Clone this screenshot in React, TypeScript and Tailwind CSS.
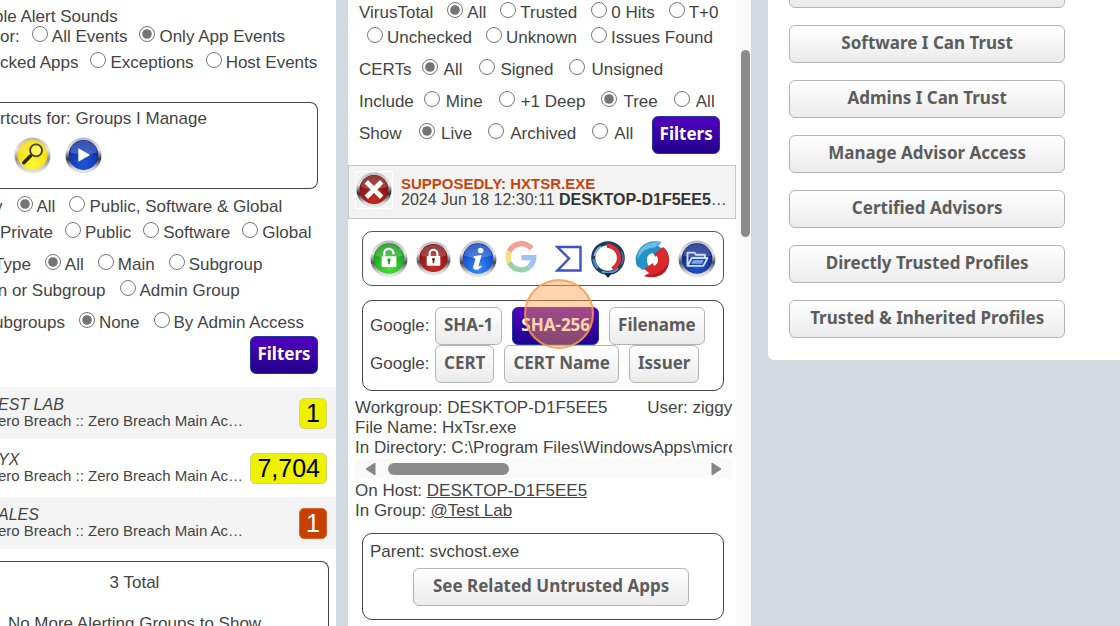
import { useId } from "react";
import type { ReactNode } from "react";
import clsx from "clsx";

interface RadioRowProps {
  name: string;
  label?: string;
  options: string[];
  selected?: string;
  className?: string;
  spacing?: "tight" | "normal" | "wide";
}

const rowGaps = { tight: "gap-3", normal: "gap-3.5", wide: "gap-4" };

const RadioRow = ({ name, label, options, selected, className, spacing = "normal" }: RadioRowProps) => (
  <div className={clsx("flex shrink-0 items-center whitespace-nowrap", rowGaps[spacing], className)}>
    {label && <span className={clsx(spacing === "wide" && "-mr-1.5 min-w-[50px]")}>{label}</span>}
    {options.map((option) => (
      <label key={option} className={clsx("flex items-center", spacing === "wide" ? "gap-1.5" : "gap-1")}>
        <input
          type="radio"
          name={name}
          defaultChecked={option === selected}
          className="mb-1.5 size-4 shrink-0 accent-[#757575]"
        />
        {option}
      </label>
    ))}
  </div>
);

interface ButtonProps {
  children: ReactNode;
  primary?: boolean;
  className?: string;
}

const Button = ({ children, primary, className }: ButtonProps) => (
  <button
    type="button"
    className={clsx(
      "h-[38px] shrink-0 rounded-md border bg-linear-to-b pb-0.5 font-['Noto_Sans','Open_Sans',sans-serif] text-[17px] leading-5 font-bold whitespace-nowrap",
      primary
        ? "border-[#1d3a9c] from-[#5200bd] to-[#22008c] text-white"
        : "border-[#b4b4b4] from-white to-[#ebebeb] text-[#5c5c5c]",
      className,
    )}
  >
    {children}
  </button>
);

interface OrbProps {
  light: string;
  dark: string;
  rim?: string;
  size?: string;
  children: ReactNode;
}

const Orb = ({ light, dark, rim = "#55555c", size = "size-[38px]", children }: OrbProps) => {
  const id = useId();
  return (
    <svg viewBox="0 0 36 36" className={size} aria-hidden="true">
      <defs>
        <linearGradient id={`${id}r`} x1="0" y1="0" x2="0" y2="1">
          <stop offset="0" stopColor="#b9b9bd" />
          <stop offset="0.35" stopColor="#e6e6e8" />
          <stop offset="0.6" stopColor={rim} />
          <stop offset="0.85" stopColor="#d2d2d6" />
          <stop offset="1" stopColor="#ececee" />
        </linearGradient>
        <radialGradient id={`${id}f`} cx="0.5" cy="0.8" r="0.75">
          <stop offset="0" stopColor={light} />
          <stop offset="1" stopColor={dark} />
        </radialGradient>
      </defs>
      <circle cx="18" cy="18" r="17.5" fill={`url(#${id}r)`} />
      <circle cx="18" cy="17.5" r="14.5" fill={`url(#${id}f)`} />
      <path d="M5 15a13 11.500 0 0 1 26 0Q18 19 5 15Z" fill="#fff" opacity="0.2" />
      {children}
    </svg>
  );
};

const Padlock = ({ open }: { open?: boolean }) => (
  <>
    <path
      d={open ? "M13.500 15v-2.500a4.300 3.800 0 0 1 8.600-.5v1.500" : "M14 16v-3a4 4 0 0 1 8 0v3"}
      fill="none"
      stroke="#fff"
      strokeWidth="2.200"
    />
    <rect x="11" y="15.500" width="14" height="10" rx="1" fill="#fff" />
    <path
      d="M18 17.500a1.500 1.500 0 0 1 .8 2.800V23h-1.600v-2.700a1.500 1.500 0 0 1 .8-2.800Z"
      fill={open ? "#169a16" : "#8f1515"}
    />
  </>
);

const UnlockIcon = () => (
  <Orb light="#4be83c" dark="#0b8f12">
    <Padlock open />
  </Orb>
);

const LockIcon = () => (
  <Orb light="#cf2d2a" dark="#7d0d10" size="size-[35px]">
    <Padlock />
  </Orb>
);

const InfoIcon = () => (
  <Orb light="#3791ff" dark="#0638b5" rim="#44464d">
    <circle cx="20.500" cy="10" r="2.600" fill="#fff" />
    <path
      d="M14 15.500l7.500-1.300-3 10.300q-.3 1.500 2.500-.3l.6.9q-3.500 3.600-6.200 3.200-2.600-.6-1.700-3.600l2-7-2-.7Z"
      fill="#fff"
    />
  </Orb>
);

const FolderIcon = () => (
  <Orb light="#2556cf" dark="#071e7e">
    <path
      d="M9 24.500V12h6.500l1.500 2h8.500v3M9 24.500l4-7.500h15l-4 7.500Z"
      fill="none"
      stroke="#cfe0ff"
      strokeWidth="1.800"
      strokeLinejoin="round"
    />
    <path d="M14.500 19h10l-2 3.500h-10Z" fill="#7ba3ef" />
  </Orb>
);

const CloseIcon = () => (
  <Orb light="#c92a22" dark="#750b0b" rim="#2e2e33" size="size-9">
    <path d="M12 11.500l12 12M24 11.500l-12 12" stroke="#fff" strokeWidth="4.800" strokeLinecap="square" />
  </Orb>
);

const SearchIcon = () => (
  <Orb light="#fff83a" dark="#f2d500" rim="#8c8c8c" size="size-[37px]">
    <path d="M9.500 25l6.500-6.500" stroke="#2c2608" strokeWidth="3.400" strokeLinecap="round" />
    <circle cx="21.500" cy="13" r="5.800" fill="#fff45a" stroke="#4a420c" strokeWidth="1.800" />
  </Orb>
);

const PlayIcon = () => (
  <Orb light="#1f57d6" dark="#0a269c" rim="#33343a" size="size-[37px]">
    <path d="M13 11l11.500 6.500L13 24Z" fill="#fff" />
  </Orb>
);

const GoogleIcon = () => (
  <svg viewBox="0 0 32 32" className="mb-1 size-8" fill="none" strokeWidth="5.200" opacity="0.5" aria-hidden="true">
    <path d="M26.500 7.500A13.200 13.200 0 0 0 4.300 10.500" stroke="#ea4335" />
    <path d="M4.300 10.500a13.200 13.200 0 0 0 0 11" stroke="#fbbc05" />
    <path d="M4.300 21.500a13.200 13.200 0 0 0 20 4.500" stroke="#34a853" />
    <path d="M24.300 26a13 13 0 0 0 4.500-9.300H16.500" stroke="#4285f4" />
  </svg>
);

const VirusTotalIcon = () => (
  <svg viewBox="0 0 28 28" className="ml-2.5 size-7" fill="none" aria-hidden="true">
    <path d="M2.500 2h23v23.500h-23L14 13.500Z" stroke="#3d52c8" strokeWidth="2.400" />
  </svg>
);

const RingIcon = () => (
  <svg viewBox="0 0 36 38" className="h-[38px] w-9" fill="none" aria-hidden="true">
    <circle cx="18" cy="18" r="14.800" stroke="#1f3c5c" strokeWidth="4" />
    <path d="M11 6.500A13.500 13.500 0 0 0 4.500 16" stroke="#7fb6d8" strokeWidth="2" />
    <path d="M4 19a14 14 0 0 0 4 9" stroke="#3f8fc4" strokeWidth="3" />
    <path d="M12 31.500a14.500 14.500 0 0 0 16-3" stroke="#4aa4d9" strokeWidth="2.200" />
    <path d="M17 5.500A12.500 12.500 0 0 1 22.500 29" stroke="#d72e33" strokeWidth="4.400" />
    <path d="M31.500 11.500a15 15 0 0 1 0 13" stroke="#4b6d92" strokeWidth="1.500" />
    <path d="M14 33h8l-4 5Z" fill="#14202e" />
  </svg>
);

const SwirlIcon = () => (
  <svg viewBox="0 0 36 38" className="h-[38px] w-9" aria-hidden="true">
    <path
      d="M28 2Q15-1 7 7q-8 9-4 19l6 4q3-2 7-3-3-2-3-7 0-6 6-7l2 4 8-8-5-3q1-2 4-4Z"
      fill="#2492c9"
    />
    <path d="M27 2Q12 1 6 10q-3 5-2 9Q8 8 22 7q1-3 5-5Z" fill="#6cbce3" />
    <path
      d="M29 7q7 5 6 15-1 12-13 15-6 1-12-1l5-3-5-4 9-6 1 3q4-2 4-6 0-4-4-6Z"
      fill="#d8292d"
    />
    <path d="M35 22q-2 11-12 14-6 2-13 0 18-1 25-14Z" fill="#ac1d22" />
  </svg>
);

const toolbar = [
  { label: "Trust", icon: <UnlockIcon /> },
  { label: "Block", icon: <LockIcon /> },
  { label: "Details", icon: <InfoIcon /> },
  { label: "Search Google", icon: <GoogleIcon /> },
  { label: "VirusTotal", icon: <VirusTotalIcon /> },
  { label: "Scan", icon: <RingIcon /> },
  { label: "Sync", icon: <SwirlIcon /> },
  { label: "Open folder", icon: <FolderIcon /> },
];

const groups = [
  { name: "EST LAB", count: "1", alert: false, shaded: true },
  { name: "YX", count: "7,704", alert: false, shaded: false },
  { name: "ALES", count: "1", alert: true, shaded: true },
];

const trustLinks = [
  "Profiles I Can Trust",
  "Software I Can Trust",
  "Admins I Can Trust",
  "Manage Advisor Access",
  "Certified Advisors",
  "Directly Trusted Profiles",
  "Trusted & Inherited Profiles",
];

const GroupsPanel = () => (
  <section className="flex w-[30%] shrink-0 flex-col overflow-hidden bg-white pt-[9px]">
    <p className="-ml-1.5 h-[15px] shrink-0 leading-4">ble Alert Sounds</p>
    <RadioRow spacing="tight" className="h-[26px]" name="events" label="or:" options={["All Events", "Only App Events"]} selected="Only App Events" />
    <RadioRow spacing="tight" className="h-[26px]" name="events" label="cked Apps" options={["Exceptions", "Host Events"]} />

    <div className="mt-[26px] mr-[18px] h-[87px] shrink-0 rounded-r-lg border border-l-0 border-[#444] pt-1.5">
      <h2 className="leading-5">rtcuts for: Groups I Manage</h2>
      <div className="mt-2 flex gap-3.5 pl-3.5">
        <button type="button" aria-label="Search groups">
          <SearchIcon />
        </button>
        <button type="button" aria-label="Run">
          <PlayIcon />
        </button>
      </div>
    </div>

    <div className="mt-[5px] flex shrink-0 flex-col gap-1.5">
      <div>
        <RadioRow className="-ml-1.5 h-[26px]" name="visibility" label="y" options={["All", "Public, Software & Global"]} selected="All" />
        <RadioRow spacing="tight" className="h-[26px]" name="visibility" label="Private" options={["Public", "Software", "Global"]} />
      </div>
      <div>
        <RadioRow className="-ml-1.5 h-[26px]" name="type" label="Type" options={["All", "Main", "Subgroup"]} selected="All" />
        <RadioRow className="-ml-1.5 h-[26px]" name="type" label="in or Subgroup" options={["Admin Group"]} />
      </div>
      <RadioRow className="-ml-1.5 h-[26px]" name="subgroups" label="ubgroups" options={["None", "By Admin Access"]} selected="None" />
    </div>
    <Button primary className="mr-[18px] w-[68px] self-end">
      Filters
    </Button>

    <ul className="mt-[13px] flex shrink-0 flex-col gap-[3px]">
      {groups.map((group) => (
        <li
          key={group.name}
          className={clsx("flex h-[52px] items-center justify-between pr-[9px]", group.shaded && "bg-[#f4f4f4]")}
        >
          <div className="-ml-0.5 text-[16px] leading-4 whitespace-nowrap">
            <p className="italic">{group.name}</p>
            <p className="text-[15px]">ero Breach :: Zero Breach Main Ac…</p>
          </div>
          <span
            className={clsx(
              "h-[31px] shrink-0 rounded-[5px] border px-1.5 text-[25px] leading-7",
              group.alert ? "border-[#d9643a] bg-[#c64100] text-white" : "border-[#d6d66a] bg-[#eef200] text-black",
            )}
          >
            {group.count}
          </span>
        </li>
      ))}
    </ul>

    <div className="mt-3 mr-[7px] -ml-[60px] shrink-0 rounded-t-lg border border-b-0 border-[#444] pt-3 text-center">
      <p className="leading-[18px]">3 Total</p>
      <p className="mt-[23px] leading-[18px]">No More Alerting Groups to Show</p>
    </div>
  </section>
);

const AppsPanel = () => (
  <section className="ml-3 flex w-[36%] shrink-0 overflow-hidden bg-white">
    <div className="min-w-0 flex-1">
      <div className="pt-px pr-4 pl-[11px]">
        <RadioRow className="h-6" name="virustotal" label="VirusTotal" options={["All", "Trusted", "0 Hits", "T+0"]} selected="All" />
        <RadioRow className="h-[26px] pl-2" name="virustotal" options={["Unchecked", "Unknown", "Issues Found"]} />
        <RadioRow spacing="wide" className="mt-[3px] h-8" name="certs" label="CERTs" options={["All", "Signed", "Unsigned"]} selected="All" />
        <RadioRow spacing="wide" className="h-8" name="include" label="Include" options={["Mine", "+1 Deep", "Tree", "All"]} selected="Tree" />
        <div className="flex items-end justify-between">
          <RadioRow spacing="wide" className="mb-1 h-8" name="show" label="Show" options={["Live", "Archived", "All"]} selected="Live" />
          <Button primary className="-mt-1 w-[68px]">
            Filters
          </Button>
        </div>
      </div>

      <article className="mt-[11px] flex h-[54px] items-center gap-2 border border-[#c9c9cb] bg-[#f3f3f3] pr-1 pl-1.5">
        <div className="-mt-1 shrink-0 border border-white">
          <CloseIcon />
        </div>
        <div className="min-w-0 text-[16px] leading-4">
          <h2 className="text-[15px] font-bold text-[#c8440b]">SUPPOSEDLY: HXTSR.EXE</h2>
          <p className="whitespace-nowrap">
            2024 Jun 18 12:30:11 <b className="text-[#333]">DESKTOP-D1F5EE5</b>…
          </p>
        </div>
      </article>

      <div className="mt-3 mr-3 ml-3.5 flex h-[55px] items-center justify-between rounded-[10px] border border-[#555] px-[7px]">
        {toolbar.map((tool) => (
          <button key={tool.label} type="button" aria-label={tool.label}>
            {tool.icon}
          </button>
        ))}
      </div>

      <div className="mt-3.5 mr-3 ml-3.5 h-[91px] rounded-[10px] border border-[#444] pt-1.5 pl-[7px]">
        <div className="flex items-center">
          <span className="w-[65px]">Google:</span>
          <div className="flex gap-2.5">
            <Button className="px-2">SHA-1</Button>
            <div className="relative">
              <Button primary className="px-2">
                SHA-256
              </Button>
              <span className="pointer-events-none absolute -top-7 left-3 size-[70px] rounded-full border-2 border-[#fb9a4b]/80 bg-[#ffa04d]/45" />
            </div>
            <Button className="px-2">Filename</Button>
          </div>
        </div>
        <div className="flex items-center">
          <span className="w-[65px]">Google:</span>
          <div className="flex gap-2.5">
            <Button className="px-2">CERT</Button>
            <Button className="px-2">CERT Name</Button>
            <Button className="px-2">Issuer</Button>
          </div>
        </div>
      </div>

      <div className="mt-[7px] pr-1 pl-[7px] leading-5">
        <div className="flex justify-between">
          <p>Workgroup: DESKTOP-D1F5EE5</p>
          <p>User: ziggy</p>
        </div>
        <p>File Name: HxTsr.exe</p>
        <p className="overflow-hidden whitespace-nowrap">In Directory: C:\Program Files\WindowsApps\microsoft</p>
        <div className="mt-px mb-0.5 flex h-5 items-center gap-3 bg-[#fafafa] px-2.5">
          <svg viewBox="0 0 11 14" className="h-3.5 w-[11px]" aria-hidden="true">
            <path d="M10 1v12L1 7Z" fill="#858585" stroke="#858585" strokeLinejoin="round" />
          </svg>
          <div className="flex-1">
            <div className="h-3 w-[39%] rounded-full bg-[#8b8b8b]" />
          </div>
          <svg viewBox="0 0 11 14" className="h-3.5 w-[11px]" aria-hidden="true">
            <path d="M1 1v12l9-6Z" fill="#858585" stroke="#858585" strokeLinejoin="round" />
          </svg>
        </div>
        <p>
          On Host: <a href="#host" className="underline">DESKTOP-D1F5EE5</a>
        </p>
        <p>
          In Group: <a href="#group" className="underline">@Test Lab</a>
        </p>
      </div>

      <div className="mt-3 mr-3 ml-3.5 flex h-[87px] flex-col rounded-[10px] border border-[#444] pt-2 pr-[7px] pl-[23px]">
        <p className="-ml-4 leading-5">Parent: svchost.exe</p>
        <Button className="mx-auto mt-1.5 w-[276px]">See Related Untrusted Apps</Button>
      </div>
    </div>

    <div className="w-[15px] shrink-0 bg-[#fafafa] pt-[50px] pl-[5px]">
      <div className="h-[187px] w-[9px] rounded-full bg-[#8b8b8b]" />
    </div>
  </section>
);

const TrustPanel = () => (
  <nav className="ml-[17px] flex-1 self-start overflow-hidden rounded-bl-md bg-white">
    <div className="-mt-[30px] flex flex-col gap-[17px] pb-[22px] pl-[21px]">
      {trustLinks.map((link) => (
        <Button key={link} className="w-[276px]">
          {link}
        </Button>
      ))}
    </div>
  </nav>
);

const App = () => (
  <main className="flex h-screen overflow-hidden bg-[#d2d9e1] font-['Liberation_Sans',Arial,sans-serif] text-[17px] text-[#444]">
    <GroupsPanel />
    <AppsPanel />
    <TrustPanel />
  </main>
);

export default App;
